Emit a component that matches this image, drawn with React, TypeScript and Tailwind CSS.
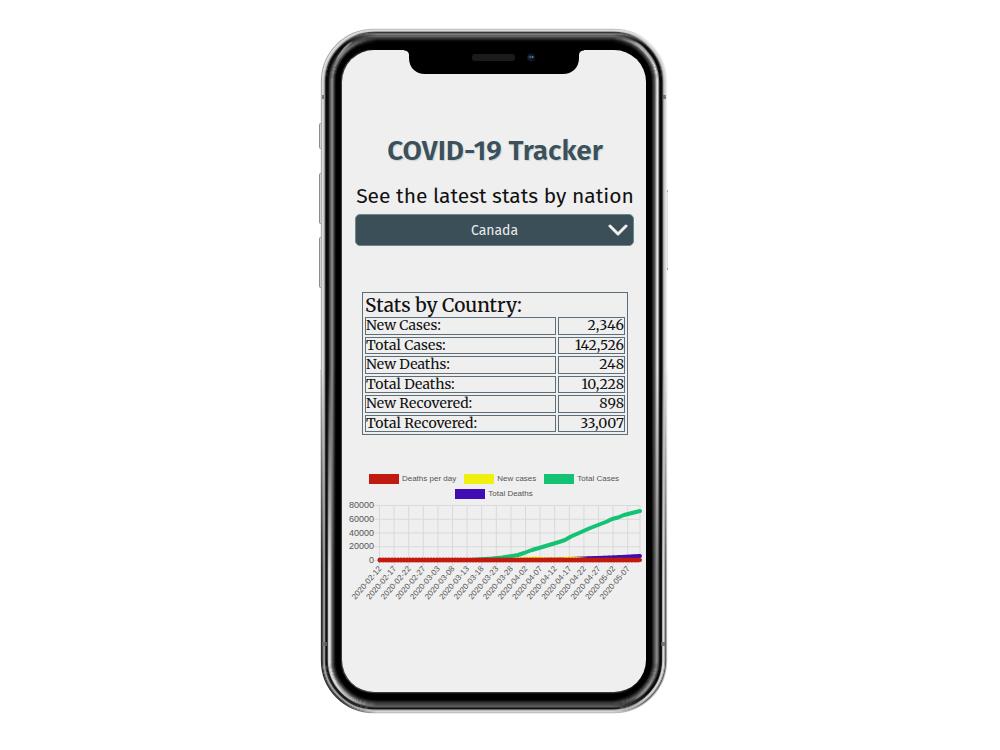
import React from "react";

const leftUpper = ["#a9a9a9", "#dedede", "#d2d2d2", "#a8a8a8", "#3a3a3a", "#060606", "#0a0a0a", "#111111", "#3c3c3c", "#5e5e5e", "#7a7a7a", "#8a8a8a", "#5a5a5a", "#343434", "#101010", "#000000", "#000000", "#000000", "#000000", "#000000", "#3a3a3a"];
const rightUpper = ["#ededed", "#dddddd", "#cfcfcf", "#b0b0b0", "#505050", "#0a0a0a", "#070707", "#161616", "#8a8a8a", "#e6e6e6", "#cfcfcf", "#8c8c8c", "#555555", "#3c3c3c", "#262626", "#050505", "#000000", "#000000", "#000000", "#000000", "#000000"];
const leftLower = ["#2a2a2a", "#3a3a3a", "#8a8a8a", "#a2a2a2", "#3a3a3a", "#0a0a0a", "#2c2c2c", "#c8c8c8", "#e4e4e4", "#d0d0d0", "#8a8a8a", "#555555", "#3c3c3c", "#1c1c1c", "#080808", "#000000", "#000000", "#000000", "#000000", "#000000", "#3a3a3a"];
const rightLower = ["#b8b8b8", "#555555", "#a0a0a0", "#dcdcdc", "#c8c8c8", "#1c1c1c", "#050505", "#161616", "#4a4a4a", "#777777", "#888888", "#707070", "#555555", "#3c3c3c", "#202020", "#050505", "#000000", "#000000", "#000000", "#000000", "#000000"];
const topSide = ["#bdbdbd", "#dedede", "#c8c8c8", "#2c2c2c", "#5a5a5a", "#8a8a8a", "#5a5a5a", "#707070", "#484848", "#383838", "#282828", "#101010", "#050505", "#000000", "#000000", "#000000", "#000000", "#000000", "#000000", "#000000", "#000000"];
const bottomSide = ["#b8b8b8", "#dcdada", "#c9c7c9", "#8a8a8a", "#0a0a0a", "#2c2c2c", "#606060", "#555555", "#484848", "#3e3e3e", "#343434", "#2a2a2a", "#101010", "#000000", "#000000", "#000000", "#000000", "#000000", "#000000", "#000000", "#3a3a3a"];

function RingGradient({ id, left, middle, right }: { id: string; left: string; middle: string; right: string }) {
  return (
    <linearGradient id={id} gradientUnits="userSpaceOnUse" x1="4" x2="350" y1="0" y2="0">
      <stop offset="0.06" stopColor={left} />
      <stop offset="0.16" stopColor={middle} />
      <stop offset="0.84" stopColor={middle} />
      <stop offset="0.94" stopColor={right} />
    </linearGradient>
  );
}

function PhoneFrame() {
  return (
    <svg className="absolute inset-0 h-full w-full" viewBox="0 0 352 690" aria-hidden="true">
      <defs>
        {topSide.map((_, i) => (
          <React.Fragment key={i}>
            <RingGradient id={`t${i}`} left={leftUpper[i]} middle={topSide[i]} right={rightUpper[i]} />
            <RingGradient id={`b${i}`} left={leftLower[i]} middle={bottomSide[i]} right={rightLower[i]} />
          </React.Fragment>
        ))}
        <linearGradient id="fade" x1="0" x2="0" y1="0" y2="1">
          <stop offset="0" stopColor="#fff" />
          <stop offset="1" stopColor="#000" />
        </linearGradient>
        <mask id="blend" maskUnits="userSpaceOnUse" x="0" y="344" width="352" height="200">
          <rect y="344" width="352" height="200" fill="url(#fade)" />
        </mask>
      </defs>
      <g fill="#d9d9d9" stroke="#8b8b8b">
        <rect x="1.5" y="97.5" width="3" height="25" rx="1" />
        <rect x="1.5" y="147.5" width="3" height="50" rx="1" />
        <rect x="1.5" y="211.5" width="3" height="50" rx="1" />
      </g>
      <rect x="347" y="165" width="3" height="79" rx="1" fill="#dcdcdc" />
      <path d="M349 164v2M349 242v2" stroke="#444" />
      <rect x="9" y="9" width="334" height="672" rx="44" fill="#000" />
      {topSide.map((_, i) => {
        const l = 3.5 + i;
        const r = 348.5 - i;
        const t = 3.5 + i;
        const b = 686.5 - i;
        const q = 52 - i;
        return (
          <g key={i} fill="none" strokeWidth="1.3">
            <path stroke={`url(#t${i})`} d={`M${l} 345V${t + q}A${q} ${q} 0 0 1 ${l + q} ${t}H${r - q}A${q} ${q} 0 0 1 ${r} ${t + q}V345`} />
            <path stroke={`url(#b${i})`} d={`M${l} 344V${b - q}A${q} ${q} 0 0 0 ${l + q} ${b}H${r - q}A${q} ${q} 0 0 0 ${r} ${b - q}V344`} />
          </g>
        );
      })}
      <g mask="url(#blend)">
        {topSide.map((_, i) => (
          <g key={i} strokeWidth="1.3">
            <path d={`M${3.5 + i} 344V544`} stroke={leftUpper[i]} />
            <path d={`M${348.5 - i} 344V544`} stroke={rightUpper[i]} />
          </g>
        ))}
      </g>
      <path d="M4 71h2M4 618h5M345 71h3M343 618h5" stroke="#666" strokeWidth="4" opacity=".8" />
      <path d="M17 37C20 28 26 19 35 15C30 21 23 27 17 37ZM335 37C332 28 326 19 316 15C322 21 329 27 335 37Z" fill="#aaa" opacity=".75" />
      <path d="M17 652C20 662 26 670 36 674C29 668 23 662 17 652ZM335 652C332 662 326 670 316 674C322 668 329 662 335 652Z" fill="#999" opacity=".6" />
    </svg>
  );
}

function Notch() {
  return (
    <svg className="absolute top-0 left-[62px] h-[26px] w-[180px]" viewBox="0 0 180 26" aria-hidden="true">
      <path d="M0 0H180V.5C177 .5 175 2 175 5V8C175 18 168 24 159 24H21C12 24 5 18 5 8V5C5 2 3 .5 0 .5Z" fill="#000" />
      <rect x="68" y="4" width="43" height="7" rx="3" fill="#1b1b1b" />
      <circle cx="127" cy="7.5" r="4" fill="#11171c" />
      <circle cx="126" cy="7" r="1.5" fill="#214f80" />
      <circle cx="128.5" cy="7" r="1" fill="#5088b5" />
    </svg>
  );
}

const stats: [string, string][] = [
  ["New Cases:", "2,346"],
  ["Total Cases:", "142,526"],
  ["New Deaths:", "248"],
  ["Total Deaths:", "10,228"],
  ["New Recovered:", "898"],
  ["Total Recovered:", "33,007"],
];

const legend = [
  { label: "Deaths per day", color: "bg-[#c11b11]" },
  { label: "New cases", color: "bg-[#f0f010]" },
  { label: "Total Cases", color: "bg-[#13c272]" },
  { label: "Total Deaths", color: "bg-[#3f0db3]" },
];

const dates = ["2020-02-12", "2020-02-17", "2020-02-22", "2020-02-27", "2020-03-03", "2020-03-08", "2020-03-13", "2020-03-18", "2020-03-23", "2020-03-28", "2020-04-02", "2020-04-07", "2020-04-12", "2020-04-17", "2020-04-22", "2020-04-27", "2020-05-02", "2020-05-07"];
const ticks = [80000, 60000, 40000, 20000, 0];

function Chart() {
  return (
    <svg className="block w-full overflow-visible" viewBox="0 1 304 105" role="img" aria-label="Cases and deaths over time">
      <g stroke="#d9d9d9">
        {ticks.map((t, i) => (
          <path key={t} d={`M32 ${5.5 + i * 13.75}H298`} />
        ))}
        {dates.map((d, i) => (
          <path key={d} d={`M${37.5 + i * 14.6} 5V66`} />
        ))}
        <path d="M298 5V60" />
      </g>
      <g fill="#555" fontFamily="Liberation Sans, sans-serif" textAnchor="end">
        {ticks.map((t, i) => (
          <text key={t} x="32" y={8 + i * 13.75} fontSize="9">{t}</text>
        ))}
        {dates.map((d, i) => (
          <text key={d} transform={`translate(${40 + i * 14.6} 69) rotate(-49)`} fontSize="8">{d}</text>
        ))}
      </g>
      <g fill="none" strokeWidth="4" strokeLinecap="round" strokeLinejoin="round">
        <path stroke="#3f0db3" d="M38 60H200L240 58.5L270 57.5L298 56" />
        <path stroke="#13c272" d="M38 60H130L150 58.5L160 57.5L170 56L176 55L182 53L190 50L197 48L207 45L217 42L223 40L229 36.5L237 33L247 28.5L256 25L265 21.5L270 19L276 17.5L282 15L290 13L298 11" />
        <path stroke="#f0f010" d="M155 59.5H168L185 58.5L193 58L205 59L222 58.5L230 58L245 59.5H298" strokeWidth="3" />
        <path stroke="#3f0db3" d="M246 58L270 57L298 56" strokeWidth="3" strokeDasharray="1 4" />
        <path stroke="#c11b11" strokeWidth="4" d="M38 60H298" />
        <path stroke="#c11b11" strokeWidth="5" strokeDasharray="0 3" d="M38 60H298" />
      </g>
    </svg>
  );
}

export default function App() {
  return (
    <main className="flex min-h-screen justify-center bg-white pt-[26px] pr-[12px] pb-8 font-['Fira_Sans','Noto_Sans',sans-serif]">
      <div className="relative h-fit w-[352px] p-6">
        <PhoneFrame />
        <div className="relative min-h-[642px] rounded-[32px] bg-[#efefef] pt-[81px] pb-16">
          <Notch />
          <header className="pl-0.5">
            <h1 className="text-center text-[28px] leading-[40px] font-semibold text-[#3c505b] [text-shadow:1px_1px_1px_#bfd5d2]">COVID-19 Tracker</h1>
            <label htmlFor="nation" className="mt-[9px] block text-center text-[21px] leading-[32px] whitespace-nowrap text-[#111]">See the latest stats by nation</label>
            <div className="relative mt-[2px] mr-[12px] ml-[11px]">
              <select id="nation" className="block h-8 w-full appearance-none rounded-[5px] border border-[#6f858b] bg-[#3b4f59] text-center text-[14px] text-[#ececec] [text-align-last:center]">
                <option>Canada</option>
              </select>
              <svg className="pointer-events-none absolute top-[10px] right-[6px] h-3 w-5" viewBox="0 0 20 12" fill="none" stroke="#efefef" strokeWidth="3" strokeLinecap="round" strokeLinejoin="round" aria-hidden="true">
                <path d="M2 2L10 10L18 2" />
              </svg>
            </div>
          </header>
          <table className="mt-[46px] ml-[20px] h-[143px] w-[266px] border-separate border-spacing-[2px] border border-[#5d6e78] font-['Merriweather','Noto_Serif','DejaVu_Serif',serif] text-[#111]">
            <thead>
              <tr>
                <th colSpan={2} className="h-[20px] p-0 text-left text-[19px] leading-[20px] font-medium">Stats by Country:</th>
              </tr>
            </thead>
            <tbody>
              {stats.map(([label, value]) => (
                <tr key={label}>
                  <td className="w-[191px] border border-[#5d6e78] p-0 text-[14px] leading-[15px]">{label}</td>
                  <td className="border border-[#5d6e78] p-0 text-right text-[14px] leading-[15px]">{value}</td>
                </tr>
              ))}
            </tbody>
          </table>
          <ul className="mt-9 flex flex-wrap justify-center gap-x-2 px-5 font-['Liberation_Sans',sans-serif] text-[8px] leading-[15px] text-[#555]">
            {legend.map((l) => (
              <li key={l.label} className="flex items-center gap-[3px]">
                <span className={`h-[10px] w-[30px] ${l.color}`} />
                {l.label}
              </li>
            ))}
          </ul>
          <Chart />
        </div>
      </div>
    </main>
  );
}
